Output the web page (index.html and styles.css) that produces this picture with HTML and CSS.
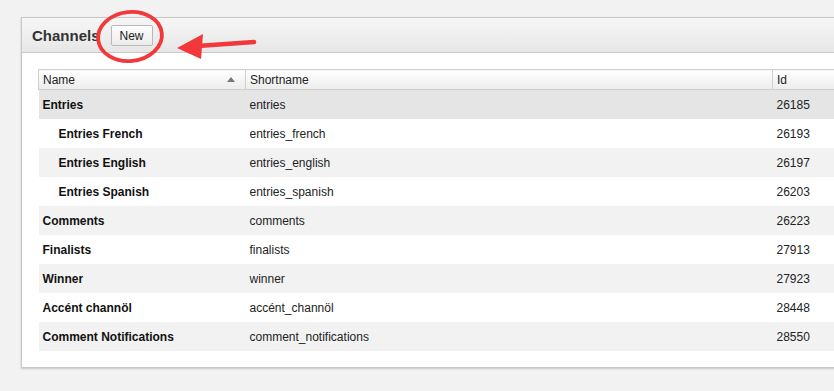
FILE: index.html
```html
<!DOCTYPE html>
<html lang="en">
<head>
    <meta charset="UTF-8">
    <title>Channels</title>
    <link rel="stylesheet" href="styles.css">
</head>
<body>
    <div class="panel">
        <div class="panel-header">
            <h2>Channels</h2>
            <button type="button" class="btn">New</button>
        </div>
        <div class="panel-body">
            <table class="grid">
                <thead>
                    <tr>
                        <th class="col-name">
                            <div class="th-inner">
                                <span>Name</span>
                                <svg class="sort" width="8" height="5" viewBox="0 0 8 5"><polygon points="0,5 4,0 8,5" fill="#777"/></svg>
                            </div>
                        </th>
                        <th class="col-short">Shortname</th>
                        <th class="col-id">Id</th>
                    </tr>
                </thead>
                <tbody>
                    <tr class="selected"><td class="name">Entries</td><td>entries</td><td>26185</td></tr>
                    <tr><td class="name child">Entries French</td><td>entries_french</td><td>26193</td></tr>
                    <tr class="alt"><td class="name child">Entries English</td><td>entries_english</td><td>26197</td></tr>
                    <tr><td class="name child">Entries Spanish</td><td>entries_spanish</td><td>26203</td></tr>
                    <tr class="alt"><td class="name">Comments</td><td>comments</td><td>26223</td></tr>
                    <tr><td class="name">Finalists</td><td>finalists</td><td>27913</td></tr>
                    <tr class="alt"><td class="name">Winner</td><td>winner</td><td>27923</td></tr>
                    <tr><td class="name">Accént channöl</td><td>accént_channöl</td><td>28448</td></tr>
                    <tr class="alt"><td class="name">Comment Notifications</td><td>comment_notifications</td><td>28550</td></tr>
                </tbody>
            </table>
        </div>
    </div>

    <!-- hand-drawn annotation over the New button -->
    <svg class="markup" width="834" height="391" viewBox="0 0 834 391">
        <ellipse cx="130" cy="36.5" rx="32" ry="24.5" transform="rotate(-6 130 36.5)" fill="none" stroke="#f2383a" stroke-width="3.8"/>
        <line x1="254" y1="42" x2="198" y2="46" stroke="#f2383a" stroke-width="4.5" stroke-linecap="round"/>
        <polygon points="177,48 203,34 201,59" fill="#f2383a"/>
    </svg>
</body>
</html>
```

FILE: styles.css
```css
body {
    margin: 0;
    padding: 17px 0 0 21px;
    background-color: #f2f2f2;
    font-family: "Liberation Sans", Arial, sans-serif;
    font-size: 12px;
    color: #222;
    overflow: hidden;
    height: 391px;
    box-sizing: border-box;
}
.panel {
    width: 850px;
    margin-right: -60px;
    background: #fff;
    border: 1px solid #c8c8c8;
    box-shadow: 0 1px 2px rgba(0, 0, 0, 0.18);
}
.panel-header {
    height: 34px;
    display: flex;
    align-items: center;
    gap: 11px;
    padding: 0 10px;
    background: linear-gradient(#f6f6f6, #e7e7e7);
    border-bottom: 1px solid #c8c8c8;
}
.panel-header h2 {
    margin: 0;
    font-size: 15px;
    font-weight: bold;
    color: #333;
}
.btn {
    height: 21px;
    padding: 0 8px;
    margin-top: 1px;
    font-family: "Liberation Sans", Arial, sans-serif;
    font-size: 12px;
    color: #222;
    background: linear-gradient(#fdfdfd, #ececec);
    border: 1px solid #b9b9b9;
    border-radius: 2px;
}
.panel-body {
    padding: 16px 0 16px 16px;
}
.grid {
    width: 830px;
    border-collapse: collapse;
}
.grid th {
    height: 19px;
    padding: 0 4px;
    text-align: left;
    vertical-align: middle;
    font-weight: normal;
    font-size: 12px;
    color: #222;
    background: linear-gradient(#ffffff, #ececec);
    border: 1px solid #cfcfcf;
}
.th-inner {
    display: flex;
    align-items: center;
    justify-content: space-between;
}
.col-name {
    width: 198px;
}
.col-short {
    width: 518px;
}
.sort {
    margin-right: 6px;
}
.grid td {
    height: 29px;
    padding: 0 4px;
}
.grid tr.alt td {
    background: #f2f2f2;
}
.grid tr.selected td {
    background: #e5e5e5;
}
.name {
    font-weight: bold;
    color: #111;
}
.name.child {
    padding-left: 20px;
}
.markup {
    position: absolute;
    top: 0;
    left: 0;
    pointer-events: none;
}
```
